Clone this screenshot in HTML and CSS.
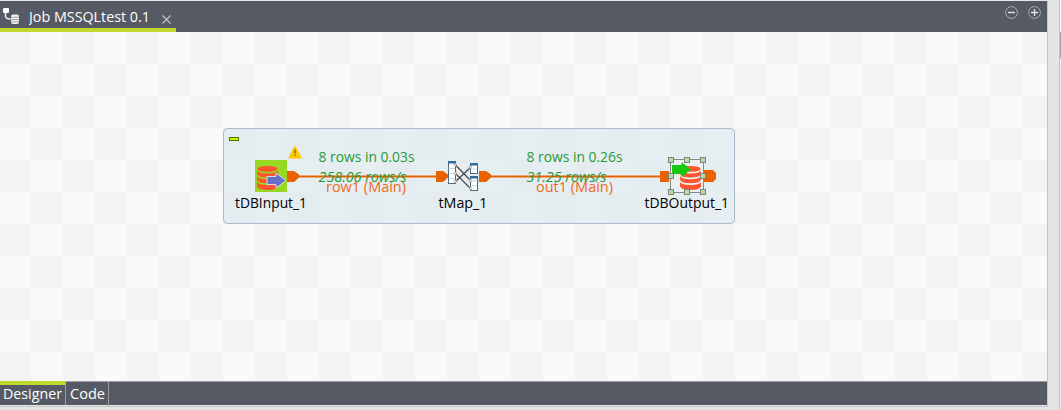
FILE: index.html
```html
<!DOCTYPE html>
<html lang="en">
<head>
<meta charset="utf-8">
<title>Job MSSQLtest 0.1</title>
<link rel="stylesheet" href="styles.css">
</head>
<body>
<div class="app">
  <main class="editor">
    <header class="tabbar">
      <div class="tab">
        <svg class="job-icon" width="17" height="17" viewBox="0 0 17 17"><rect width="6" height="5" rx="1" fill="#fff"/><path d="M2.5 5v3q0 3 5 3" fill="none" stroke="#fff" stroke-width="1.3"/><rect x="8" y="6.5" width="8" height="9.5" rx="2" fill="#f3f3f3"/><path d="M8 9.3h8M8 11.6h8M8 13.9h8" stroke="#8b8e95" stroke-width=".8"/></svg>
        <svg class="title" width="124" height="24"><text x="0" y="17" textLength="121" lengthAdjust="spacingAndGlyphs">Job MSSQLtest 0.1</text></svg>
        <svg class="close" width="9" height="9" viewBox="0 0 9 9"><path d="M.5.5l8 8M8.5.5l-8 8" stroke="#c4c7cb" stroke-width="1.1"/></svg>
      </div>
      <div class="tools">
        <svg width="13" height="13" viewBox="0 0 13 13"><circle cx="6.5" cy="6.5" r="5.9" fill="none" stroke="#a9acb2"/><path d="M3 6.5h7" stroke="#e5e6e8" stroke-width="1.3"/></svg>
        <svg width="13" height="13" viewBox="0 0 13 13"><circle cx="6.5" cy="6.5" r="5.9" fill="none" stroke="#a9acb2"/><path d="M3 6.5h7M6.5 3v7" stroke="#e5e6e8" stroke-width="1.3"/></svg>
      </div>
    </header>
    <svg class="canvas" width="1047" height="349" viewBox="0 32 1047 349">
      <defs>
        <g id="database" fill="#ff5630"><ellipse cx="10.500" cy="2.900" rx="10.200" ry="2.900"/><path d="M0 4.500q1.500 3 10.500 3t10.500-3v3.500q-1.500 3.500-10.500 3.500t-10.500-3.500zM0 10.200q1.500 3 10.500 3t10.500-3v3.500q-1.500 3.500-10.500 3.500t-10.500-3.500zM0 16q1.500 3 10.500 3t10.500-3v4.500q-1.500 3.500-10.500 3.500t-10.500-3.500z"/></g>
        <path id="port" d="M0 0h7l5 3.500v3L7 11H0z"/>
        <g id="link-ends" fill="#fff" stroke="#888" stroke-width=".8"><circle cx="455.500" cy="165" r="1.200"/><circle cx="455.500" cy="173.500" r="1.200"/><circle cx="455.500" cy="181.500" r="1.200"/><circle cx="470.500" cy="167.500" r="1.200"/><circle cx="470.500" cy="180.500" r="1.200"/><circle cx="470.500" cy="188.500" r="1.200"/></g>
      </defs>
      <rect class="subjob" x="223.500" y="128.500" width="511" height="95" rx="4"/>
      <rect x="229.500" y="137.500" width="9" height="3" fill="#c0ff00" stroke="#527000"/>

      <g class="flow">
        <path d="M297 176.500h141M489 176.500h173"/>
        <use href="#port" x="287" y="171"/>
        <use href="#port" x="436" y="171"/>
        <use href="#port" x="479" y="171"/>
        <path class="solid" d="M660 171h9v11h-9zM704 170h9l3 3v6l-3 3h-9z"/>
      </g>

      <rect x="255" y="160" width="32" height="32" fill="#98d822"/>
      <use href="#database" x="257" y="166"/>
      <path d="M267 176.500h9v-3.500l10 7.500-10 7.500v-3.500h-9z" fill="#6671c5" stroke="#d7dbe9"/>
      <path d="M295 147l5.500 10.500h-11z" fill="#ffc800" stroke="#ffc800" stroke-width="1.800" stroke-linejoin="round"/>
      <path d="M295 149.500v4M295 154.500v1.500" stroke="#866900" stroke-width="1.400"/>

      <g fill="#fff" stroke="#506b83"><rect x="448.500" y="161.500" width="7" height="22"/><rect x="470.500" y="163.500" width="7" height="10"/><rect x="470.500" y="176.500" width="7" height="14"/></g>
      <path d="M448 162.500h8M470 164.500h8M470 177.500h8" stroke="#286caa" stroke-width="2"/>
      <path d="M450 168.500h5M450 173.500h5M450 178.500h5M472 169h5M472 181h5M472 185.500h5" stroke="#d4d9df"/>
      <path d="M455.500 165l15 15.500M455.500 173.500l15 15M455.500 181.500l15-14" fill="none" stroke="#444" stroke-width="1.100"/>
      <use href="#link-ends"/>

      <rect x="671" y="160" width="32" height="32" fill="#edf0f2"/>
      <use href="#database" x="680" y="166"/>
      <path d="M672 165h9.500v-3l9.500 7.500-9.500 7.500v-3h-9.500z" fill="#17c90e"/>
      <rect x="670.500" y="159.500" width="33" height="33" fill="none" stroke="#888"/>
      <g class="handles"><rect x="668.500" y="157.500" width="5" height="5"/><rect x="684.500" y="157.500" width="5" height="5"/><rect x="700.500" y="157.500" width="5" height="5"/><rect x="668.500" y="173.500" width="5" height="5"/><rect x="700.500" y="173.500" width="5" height="5"/><rect x="668.500" y="189.500" width="5" height="5"/><rect x="684.500" y="189.500" width="5" height="5"/><rect x="700.500" y="189.500" width="5" height="5"/></g>

      <g class="stats">
        <text x="318.500" y="162" textLength="96" lengthAdjust="spacingAndGlyphs">8 rows in 0.03s</text>
        <text class="rate" x="318.500" y="182" textLength="88" lengthAdjust="spacingAndGlyphs">258.06 rows/s</text>
        <text x="526.500" y="162" textLength="96" lengthAdjust="spacingAndGlyphs">8 rows in 0.26s</text>
        <text class="rate" x="526.500" y="182" textLength="80" lengthAdjust="spacingAndGlyphs">31.25 rows/s</text>
      </g>
      <g class="links">
        <text x="326" y="192" textLength="80" lengthAdjust="spacingAndGlyphs">row1 (Main)</text>
        <text x="536" y="192" textLength="77" lengthAdjust="spacingAndGlyphs">out1 (Main)</text>
      </g>
      <g class="names">
        <text x="235" y="208" textLength="72" lengthAdjust="spacingAndGlyphs">tDBInput_1</text>
        <text x="438.500" y="208" textLength="49" lengthAdjust="spacingAndGlyphs">tMap_1</text>
        <text x="644.500" y="208" textLength="84.500" lengthAdjust="spacingAndGlyphs">tDBOutput_1</text>
      </g>
    </svg>
    <footer class="views">
      <div class="view active"><svg width="62" height="20"><text x="3" y="15" textLength="59" lengthAdjust="spacingAndGlyphs">Designer</text></svg></div>
      <div class="view"><svg width="42" height="20"><text x="4" y="15" textLength="35" lengthAdjust="spacingAndGlyphs">Code</text></svg></div>
    </footer>
  </main>
  <div class="sash"></div>
  <aside class="side"><div class="side-top"></div><div class="side-dark"></div><div class="side-rows"></div></aside>
</div>
</body>
</html>
```

FILE: styles.css
```css
* { box-sizing: border-box; }
body { margin: 0; background: #e4e4e4; font: 15px "Open Sans", "Noto Sans", sans-serif; }
svg { display: block; flex: none; }
text { font-size: 15px; }
.app { width: 1061px; height: 410px; display: flex; overflow: hidden; }
.editor { width: 1048px; height: 407px; border-top: 1px solid #e4e8e4; border-right: 1px solid #c4c4c4; border-bottom: 1px solid #c8c8c8; }
.tabbar { height: 31px; background: #555a64; display: flex; justify-content: space-between; }
.tab { width: 176px; border-bottom: 4px solid #c1d82f; display: flex; padding-left: 3px; }
.tab text, .views text { fill: #fff; }
.job-icon { margin-top: 7px; }
.title { margin: 4px 0 0 9px; }
.close { margin: 14px 0 0 9px; }
.tools { display: flex; gap: 10px; padding: 5px 6px 0 0; }
.canvas { background: conic-gradient(#fafafa 25%, #f3f3f3 0 50%, #fafafa 0 75%, #f3f3f3 0) -1px 0 / 64px 64px; }
.subjob { fill: #dce8ee; fill-opacity: .65; stroke: #a9bccb; }
.flow { fill: #e86200; stroke: #e86200; stroke-width: 2; }
.flow use, .solid { stroke: none; }
.handles { fill: #b2dfa0; stroke: #808080; }
.stats { fill: #249b35; }
.rate { font-style: italic; }
.links { fill: #eb6a24; }
.names { fill: #000; }
.views { height: 24px; display: flex; background: #555a64; border-top: 1px solid #9b9e9f; }
.view { border-right: 1px solid #9a9d9f; height: 24px; padding-top: 2px; }
.view.active { width: 66px; margin-top: -1px; border-top: 4px solid #c1d82f; padding-top: 0; }
.view.active svg { margin-top: -1px; }
.sash { width: 11px; }
.side { width: 2px; border-left: 1px solid #c4c4c4; }
.side-top { height: 32px; background: #fff; }
.side-dark { height: 26px; background: #a2a4aa; }
.side-rows { height: 352px; background: repeating-linear-gradient(#eee 0 8px, #ddd 8px 9px, #eee 9px 26px); }
```
